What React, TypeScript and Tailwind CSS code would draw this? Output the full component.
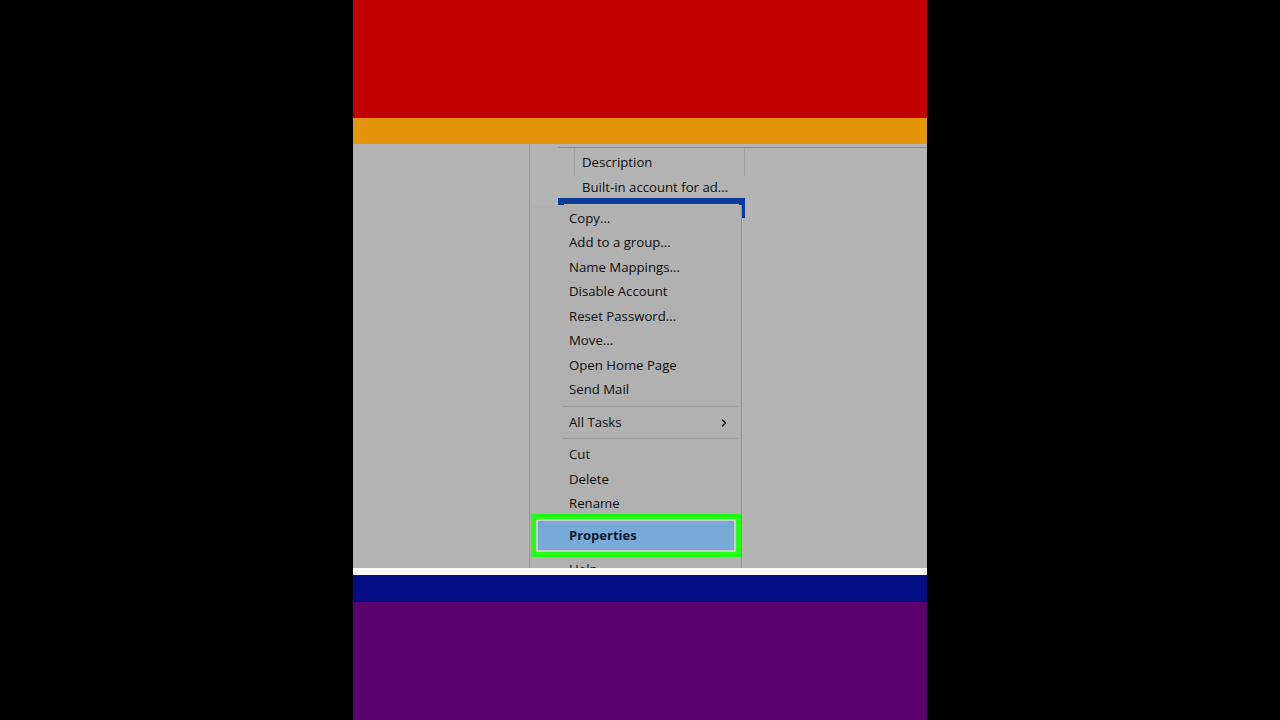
import { ChevronRight } from 'lucide-react';

const TOP_ITEMS = [
  'Copy...',
  'Add to a group...',
  'Name Mappings...',
  'Disable Account',
  'Reset Password...',
  'Move...',
  'Open Home Page',
  'Send Mail',
];

const EDIT_ITEMS = ['Cut', 'Delete', 'Rename'];

function Item({ label }: { label: string }) {
  return (
    <div className="h-[24.5px] flex items-center pl-[39px] pt-[1px] text-[13.2px] text-[#0e0e0e]">{label}</div>
  );
}

function Separator() {
  return (
    <div className="h-[8px] flex items-center ml-[33px] mr-[3px]">
      <div className="h-px w-full bg-[#9d9d9d]" />
    </div>
  );
}

export default function App() {
  return (
    <div
      className="w-full h-[720px] bg-black flex justify-center"
      style={{ fontFamily: '"Open Sans", "Noto Sans", sans-serif' }}
    >
      <div className="w-[574px] h-full flex flex-col">
        {/* colour bands */}
        <div className="h-[118px] bg-[#c10000]" />
        <div className="h-[26px] bg-[#e3940a]" />

        {/* screenshot area */}
        <div className="h-[424px] bg-[#b4b4b4] flex overflow-hidden">
          <div className="w-[177px] border-r border-[#9a9a9a]" />

          <div className="flex-1 relative">
            {/* list view behind the menu */}
            <div className="ml-[28px] mt-[3px] border-t border-[#8e8e8e]">
              <div className="h-[28px] flex">
                <div className="w-[17px] border-r border-[#a2a2a2]" />
                <div className="w-[170px] border-r border-[#a2a2a2] pl-[7px] pt-[2px] flex items-center text-[13.2px] text-[#0e0e0e]">
                  Description
                </div>
              </div>
              <div className="h-[22px] flex items-center pl-[24px] pt-[2px] text-[13.2px] text-[#0e0e0e]">
                Built-in account for ad...
              </div>
              <div className="w-[187px] h-[20px] border-[6px] border-b-0 border-[#0b3c9c]" />
            </div>

            {/* context menu */}
            <div className="absolute left-0 top-[61px] bottom-0 w-[212px] bg-[#b1b1b1] border-r border-[#8f8f8f] pt-[1px]">
              {TOP_ITEMS.map((label) => (
                <Item key={label} label={label} />
              ))}
              <Separator />
              <div className="h-[24.5px] flex items-center pl-[39px] pr-[11px] pt-[1px] justify-between text-[13.2px] text-[#0e0e0e]">
                <span>All Tasks</span>
                <ChevronRight className="w-[12px] h-[12px]" strokeWidth={2.5} />
              </div>
              <Separator />
              {EDIT_ITEMS.map((label) => (
                <Item key={label} label={label} />
              ))}
              <div className="-mt-[2px] ml-[1px] h-[43px] border-[5px] border-[#22ff12] p-[2px] bg-[#cdcdcd]">
                <div className="h-full bg-[#78a9d7] flex items-center pl-[31px] pt-[1px] text-[13px] font-bold text-[#0f1a2e]">
                  Properties
                </div>
              </div>
              <Item label="Help" />
            </div>
          </div>
        </div>

        <div className="h-[7px] bg-white" />
        <div className="h-[27px] bg-[#020d84]" />
        <div className="flex-1 bg-[#5b006f]" />
      </div>
    </div>
  );
}
